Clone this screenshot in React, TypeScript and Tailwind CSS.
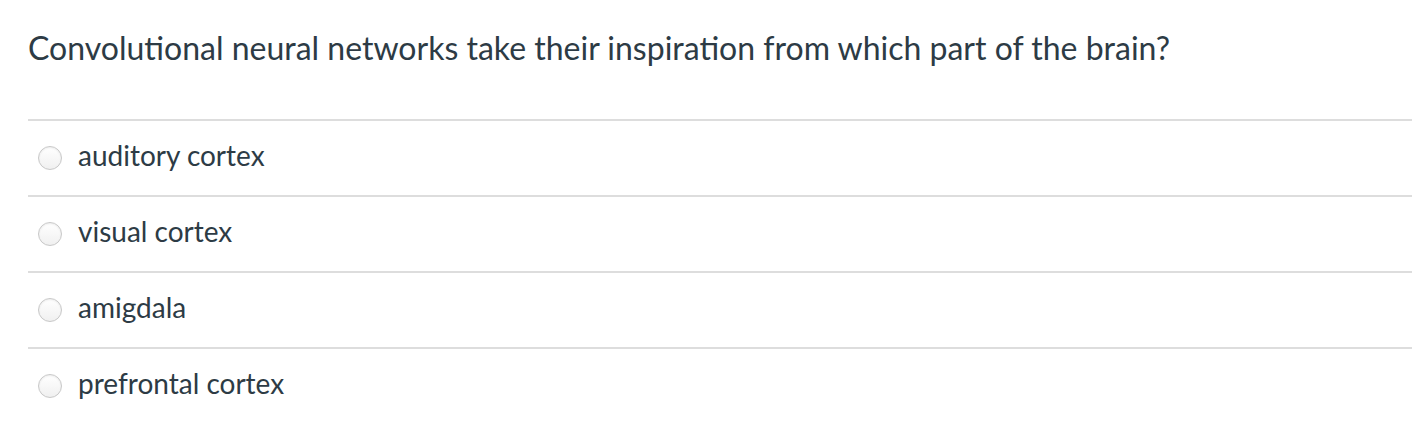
import React from 'react';

const options = ['auditory cortex', 'visual cortex', 'amigdala', 'prefrontal cortex'];

export default function App() {
  return (
    <main className="w-[1412px] h-[436px] bg-white text-[#2d3b45] overflow-hidden" style={{ fontFamily: 'Lato, "Open Sans", sans-serif' }}>
      <h1 className="pl-[28px] pt-[28px] text-[32px] leading-[40px]">
        Convolutional neural networks take their inspiration from which part of the brain?
      </h1>
      <div className="mt-[51px] ml-[28px] border-t-2 border-[#dddddd]">
        {options.map((o) => (
          <label key={o} className="flex items-center h-[76px] border-b-2 border-[#dddddd] last:border-b-transparent">
            <span className="ml-[10px] mb-[1px] w-[24px] h-[24px] rounded-full border border-[#c8c8c8] bg-gradient-to-b from-white to-[#f0f0f0] shadow-[inset_0_1px_2px_rgba(0,0,0,0.08)]" />
            <span className="ml-[16px] mb-[7px] text-[28px] leading-[32px]">{o}</span>
          </label>
        ))}
      </div>
    </main>
  );
}
